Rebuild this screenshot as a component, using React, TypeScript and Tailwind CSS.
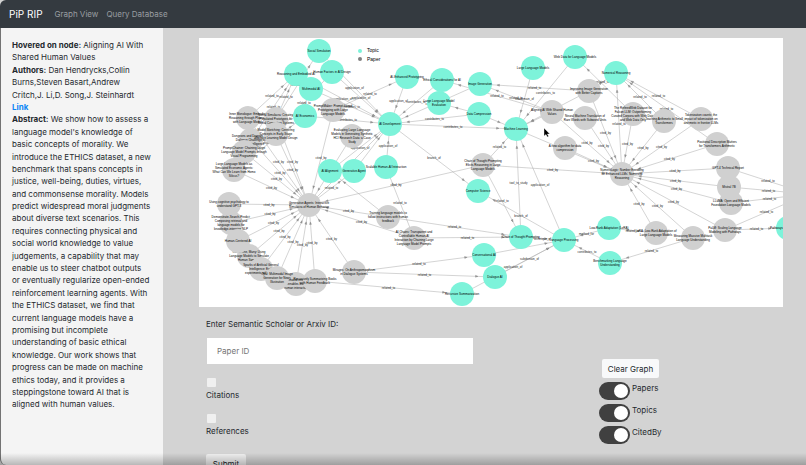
import React from "react";

type Kind = "topic" | "paper";

interface GraphNode {
  x: number;
  y: number;
  kind: Kind;
  lines: string[];
}

const topic = (x: number, y: number, ...lines: string[]): GraphNode => ({ x, y, kind: "topic", lines });
const paper = (x: number, y: number, ...lines: string[]): GraphNode => ({ x, y, kind: "paper", lines });

// later nodes are painted over earlier ones
const nodes: Record<string, GraphNode> = {
  inner: paper(248, 118, "Inner Monologue: Embodied", "Reasoning through Planning", "with Language Models"),
  dungeons: paper(251, 140, "Dungeons and Dragons as a", "Dialogue Challenge for", "Artificial Intelligence"),
  simulacra: paper(276, 119, "Social Simulacra: Creating", "Populated Prototypes for", "Social Computing Systems"),
  sketching: paper(276, 134, "Model Sketching: Centering", "Concepts in Early-Stage", "Machine Learning Model Design"),
  chainer: paper(244, 152, "PromptChainer: Chaining Large", "Language Model Prompts through", "Visual Programming"),
  homo: paper(234, 170, "Large Language Models as", "Simulated Economic Agents:", "What Can We Learn from Homo", "Silicus?"),
  maker: paper(333, 110, "PromptMaker: Prompt-based", "Prototyping with Large", "Language Models"),
  hci: paper(352, 136, "Evaluating Large Language", "Models in Generating Synthetic", "HCI Research Data: a Case", "Study"),
  cognitive: paper(229, 204, "Using cognitive psychology to", "understand GPT-3"),
  search: paper(231, 223, "Demonstrate-Search-Predict:", "Composing retrieval and", "language models for", "knowledge-intensive NLP"),
  many: paper(249, 256, "Out of One, Many: Using", "Language Models to Simulate", "Human Samples"),
  humanAi: paper(238, 241, "Human-Centered AI"),
  sparks: paper(261, 269, "Sparks of Artificial General", "Intelligence: Early", "experiments with GPT-4"),
  automated: paper(296, 284, "Automated emotion", "and AI enables learning in", "human interaction"),
  multiImage: paper(277, 278, "Opal: Multimodal Image", "Generation for News", "Illustration"),
  books: paper(315, 281, "Recursively Summarizing Books", "with Human Feedback"),
  mirages: paper(354, 272, "Mirages: On Anthropomorphism", "in Dialogue Systems"),
  training: paper(388, 217, "Training language models to", "follow instructions with human", "feedback"),
  chains: paper(414, 238, "AI Chains: Transparent and", "Controllable Human-AI", "Interaction by Chaining Large", "Language Model Prompts"),
  cot: paper(483, 165, "Chain of Thought Prompting", "Elicits Reasoning in Large", "Language Models"),
  agents: paper(309, 205, "Generative Agents: Interactive", "Simulacra of Human Behavior"),
  caption: paper(589, 91, "Improving Image Generation", "with Better Captions"),
  nmt: paper(585, 118, "Neural Machine Translation of", "Rare Words with Subword Units"),
  ethics: paper(552, 112, "Aligning AI With Shared Human", "Values"),
  bpe: paper(565, 148, "A new algorithm for data", "compression"),
  refined: paper(633, 114, "The RefinedWeb Dataset for", "Falcon LLM: Outperforming", "Curated Corpora with Web Data,", "and Web Data Only"),
  arithmetic: paper(664, 121, "Teaching Arithmetic to Small", "Transformers"),
  token: paper(701, 119, "Tokenization counts: the", "impact of tokenization on", "arithmetic in frontier LLMs"),
  positional: paper(717, 144, "Positional Description Matters", "for Transformers Arithmetic"),
  gpt4: paper(728, 168, "GPT-4 Technical Report"),
  llama: paper(731, 203, "LLaMA: Open and Efficient", "Foundation Language Models"),
  mistral: paper(729, 187, "Mistral 7B"),
  palm: paper(725, 230, "PaLM: Scaling Language", "Modeling with Pathways"),
  lora: paper(656, 233, "LoRA: Low-Rank Adaptation of", "Large Language Models"),
  mmlu: paper(693, 238, "Measuring Massive Multitask", "Language Understanding"),
  numero: paper(622, 174, "NumeroLogic: Number Encoding", "for Enhanced LLMs' Numerical", "Reasoning"),
  social: topic(319, 51, "Social Simulation"),
  embodied: topic(296, 74, "Reasoning and Embodied AI"),
  factors: topic(332, 72, "Human Factors in AI Design"),
  multimodal: topic(311, 89, "Multimodal AI"),
  economics: topic(305, 116, "AI Economics"),
  alignment: topic(330, 171, "AI Alignment"),
  genAgent: topic(354, 171, "Generative Agent"),
  scalable: topic(386, 167, "Scalable Human-AI Interaction"),
  enhanced: topic(407, 77, "AI-Enhanced Prototyping"),
  ethical: topic(442, 80, "Ethical Considerations for AI"),
  evaluation: topic(439, 103, "Large Language Model", "Evaluation"),
  imageGen: topic(480, 84, "Image Generation"),
  compression: topic(479, 114, "Data Compression"),
  aiDev: topic(390, 124, "AI Development"),
  llm: topic(533, 68, "Large Language Models"),
  webData: topic(575, 57, "Web Data for Language Models"),
  numerical: topic(616, 73, "Numerical Reasoning"),
  ml: topic(516, 129, "Machine Learning"),
  cs: topic(478, 191, "Computer Science"),
  cotTopic: topic(521, 237, "Chain of Thought Prompting"),
  nlp: topic(564, 240, "Language Processing"),
  conversational: topic(484, 255, "Conversational AI"),
  dialogue: topic(495, 277, "Dialogue AI"),
  recursive: topic(462, 294, "Recursive Summarization"),
  loraTopic: topic(609, 228, "Low-Rank Adaptation (LoRA)"),
  benchmark: topic(610, 263, "Benchmarking Language", "Understanding"),
  pathways: topic(788, 228, "Pathways Language Model"),
  offscreen: topic(808, 194),
};

const edges: [string, string, string][] = [
  ["inner", "embodied", "related_to"],
  ["simulacra", "social", "related_to"],
  ["sketching", "factors", "related_to"],
  ["dungeons", "embodied", "related_to"],
  ["simulacra", "embodied", "related_to"],
  ["homo", "economics", "related_to"],
  ["maker", "enhanced", "related_to"],
  ["factors", "aiDev", "application_of"],
  ["social", "aiDev", "application_of"],
  ["multimodal", "aiDev", "contributes_to"],
  ["embodied", "aiDev", "application_of"],
  ["economics", "aiDev", "contributes_to"],
  ["enhanced", "aiDev", "application_of"],
  ["ethical", "aiDev", "contributes_to"],
  ["imageGen", "aiDev", "contributes_to"],
  ["compression", "evaluation", ""],
  ["compression", "aiDev", "contributes_to"],
  ["aiDev", "ml", "contributes_to"],
  ["alignment", "aiDev", "application_of"],
  ["genAgent", "aiDev", ""],
  ["scalable", "aiDev", "application_of"],
  ["agents", "aiDev", ""],
  ["aiDev", "cs", "branch_of"],
  ["hci", "agents", ""],
  ["maker", "agents", "cited_by"],
  ["inner", "agents", "cited_by"],
  ["simulacra", "agents", "cited_by"],
  ["sketching", "agents", "cited_by"],
  ["dungeons", "agents", "cited_by"],
  ["chainer", "agents", "cited_by"],
  ["homo", "agents", "cited_by"],
  ["cognitive", "agents", "cited_by"],
  ["search", "agents", "cited_by"],
  ["humanAi", "agents", "cited_by"],
  ["many", "agents", "cited_by"],
  ["sparks", "agents", "cited_by"],
  ["multiImage", "agents", "cited_by"],
  ["automated", "agents", "cited_by"],
  ["books", "agents", "cited_by"],
  ["mirages", "agents", "cited_by"],
  ["training", "agents", "cited_by"],
  ["chains", "agents", "cited_by"],
  ["cot", "agents", "cited_by"],
  ["agents", "genAgent", "related_to"],
  ["training", "alignment", ""],
  ["chains", "scalable", "related_to"],
  ["training", "cotTopic", "related_to"],
  ["chains", "cotTopic", "related_to"],
  ["mirages", "conversational", "related_to"],
  ["mirages", "dialogue", "related_to"],
  ["books", "recursive", "related_to"],
  ["caption", "imageGen", "related_to"],
  ["ethics", "imageGen", "related_to"],
  ["ethics", "ethical", "related_to"],
  ["compression", "ml", ""],
  ["llm", "ml", "subdomain_of"],
  ["webData", "ml", "contributes_to"],
  ["caption", "ml", ""],
  ["ethics", "ml", ""],
  ["refined", "webData", ""],
  ["numero", "numerical", "related_to"],
  ["caption", "numerical", "related_to"],
  ["arithmetic", "numerical", "related_to"],
  ["token", "numerical", "related_to"],
  ["positional", "numerical", "related_to"],
  ["ethics", "numero", "cited_by"],
  ["nmt", "numero", "cited_by"],
  ["caption", "numero", "cited_by"],
  ["bpe", "numero", "cited_by"],
  ["ml", "numero", ""],
  ["refined", "numero", "cited_by"],
  ["arithmetic", "numero", "cited_by"],
  ["token", "numero", "cited_by"],
  ["positional", "numero", "cited_by"],
  ["gpt4", "numero", "cited_by"],
  ["mistral", "numero", "cited_by"],
  ["llama", "numero", "cited_by"],
  ["palm", "numero", "cited_by"],
  ["lora", "numero", "cited_by"],
  ["mmlu", "numero", "cited_by"],
  ["cot", "numero", "cited_by"],
  ["cot", "ml", "related_to"],
  ["cot", "cotTopic", "related_to"],
  ["cotTopic", "ml", "tool_to_study"],
  ["nlp", "ml", "application_of"],
  ["nlp", "cs", "branch_of"],
  ["cotTopic", "nlp", "technique_of"],
  ["conversational", "nlp", ""],
  ["dialogue", "nlp", "subdomain_of"],
  ["recursive", "nlp", "application_of"],
  ["loraTopic", "nlp", "method_for"],
  ["benchmark", "nlp", "contributes_to"],
  ["lora", "loraTopic", "related_to"],
  ["mmlu", "benchmark", "related_to"],
  ["palm", "pathways", "related_to"],
  ["gpt4", "offscreen", "related_to"],
  ["mistral", "offscreen", "related_to"],
  ["llama", "offscreen", "related_to"],
  ["palm", "offscreen", "related_to"],
];

const Edge = ({ from, to, label }: { from: GraphNode; to: GraphNode; label: string }) => {
  const angle = Math.atan2(to.y - from.y, to.x - from.x);
  const ax = to.x - Math.cos(angle) * 18;
  const ay = to.y - Math.sin(angle) * 18;
  return (
    <g>
      <line x1={from.x} y1={from.y} x2={to.x} y2={to.y} stroke="#a8a8a8" strokeWidth="0.5" />
      <path
        d="M-1.500 -1L1 0L-1.500 1Z"
        fill="#999"
        stroke="#777"
        strokeWidth="0.3"
        transform={`translate(${ax} ${ay}) rotate(${(angle * 180) / Math.PI})`}
      />
      {label && (
        <text x={(from.x + to.x) / 2} y={(from.y + to.y) / 2 + 1} textAnchor="middle" className="fill-neutral-800 text-[3px]">
          {label}
        </text>
      )}
    </g>
  );
};

const Node = ({ node }: { node: GraphNode }) => (
  <g>
    <circle cx={node.x} cy={node.y} r="12" fill={node.kind === "topic" ? "#7df3da" : "#d0d0d0"} />
    <text textAnchor="middle" className="fill-black text-[3px]">
      {node.lines.map((line, i) => (
        <tspan key={line} x={node.x} y={node.y + 1 + (i - (node.lines.length - 1) / 2) * 4}>
          {line}
        </tspan>
      ))}
    </text>
  </g>
);

const Graph = () => (
  <svg viewBox="199 38 584 269" className="block w-full bg-white" role="img" aria-label="Paper and topic graph">
    {edges.map(([from, to, label]) => (
      <Edge key={`${from}-${to}`} from={nodes[from]} to={nodes[to]} label={label} />
    ))}
    {Object.entries(nodes).map(([id, node]) => (
      <Node key={id} node={node} />
    ))}
    {/* legend */}
    <circle cx="360" cy="51" r="2" fill="#7df3da" />
    <circle cx="360" cy="59" r="2" fill="#808080" />
    <text x="367" y="52" className="text-[5px]">Topic</text>
    <text x="367" y="61" className="text-[5px]">Paper</text>
    {/* pointer */}
    <path d="M544 128v8l2-1.500 1.300 2.500 1.300-.7-1.200-2.300h2.400z" fill="#000" stroke="#fff" strokeWidth="0.4" />
  </svg>
);

const Toggle = ({ label }: { label: string }) => (
  <label className="flex h-[22px] items-start gap-[2px]">
    <input type="checkbox" defaultChecked className="peer sr-only" />
    <span className="flex h-[18px] w-[31px] shrink-0 items-center rounded-full bg-[#404040] px-[2px] peer-checked:justify-end">
      <span className="size-[14px] rounded-full bg-white" />
    </span>
    <span className="leading-[13px]">{label}</span>
  </label>
);

const Sidebar = () => (
  <aside className="w-[163px] shrink-0 rounded-bl-md border-l border-neutral-500 bg-[#f4f4f4] pt-[11px] pr-3 pl-[11px] leading-[1.55]">
    <p>
      <b>Hovered on node:</b> Aligning AI With Shared Human Values
    </p>
    <p>
      <b>Authors:</b> Dan Hendrycks,Collin Burns,Steven Basart,Andrew Critch,J. Li,D. Song,J. Steinhardt
    </p>
    <p>
      <a href="#paper" className="font-bold text-[#0a84f5]">Link</a>
    </p>
    <p>
      <b>Abstract:</b> We show how to assess a language model's knowledge of basic concepts of morality. We introduce
      the ETHICS dataset, a new benchmark that spans concepts in justice, well-being, duties, virtues, and commonsense
      morality. Models predict widespread moral judgments about diverse text scenarios. This requires connecting
      physical and social world knowledge to value judgements, a capability that may enable us to steer chatbot outputs
      or eventually regularize open-ended reinforcement learning agents. With the ETHICS dataset, we find that current
      language models have a promising but incomplete understanding of basic ethical knowledge. Our work shows that
      progress can be made on machine ethics today, and it provides a steppingstone toward AI that is aligned with
      human values.
    </p>
  </aside>
);

export default function App() {
  return (
    <div className="relative flex h-screen flex-col overflow-hidden bg-[#d3d3d3] font-['Inter','Liberation_Sans',sans-serif] text-[8px] text-[#24292e]">
      <nav className="flex h-7 shrink-0 items-center rounded-tl-md bg-[#343a40] pl-[9px] text-[#999da0]">
        <a href="#home" className="mr-3 text-[10px] text-white">PiP RIP</a>
        <a href="#graph" className="mr-2">Graph View</a>
        <a href="#query">Query Database</a>
      </nav>
      <div className="flex min-h-0 flex-1">
        <Sidebar />
        <main className="min-w-0 flex-1 pt-[10px] pr-[23px] pl-9">
          <div className="font-['Liberation_Sans',Arial,sans-serif]">
            <Graph />
          </div>
          <div className="flex items-start justify-between pr-[120px] pl-[7px]">
            <form className="flex w-[267px] flex-col items-start pt-[11px]" onSubmit={(e) => e.preventDefault()}>
              <label htmlFor="paper-id" className="leading-3">Enter Semantic Scholar or Arxiv ID:</label>
              <input
                id="paper-id"
                type="text"
                placeholder="Paper ID"
                className="mt-2 h-[26px] w-full border-l border-[#d3d3d3] bg-white px-[10px] placeholder:text-[#757575]"
              />
              <label className="mt-[14px] flex h-9 flex-col leading-3">
                <input type="checkbox" className="mb-[2px] ml-px size-[9px] appearance-none rounded-[1px] bg-[#f0f0f0] checked:bg-[#0a84f5]" />
                Citations
              </label>
              <label className="flex h-10 flex-col leading-3">
                <input type="checkbox" className="mb-[2px] ml-px size-[9px] appearance-none rounded-[1px] bg-[#f0f0f0] checked:bg-[#0a84f5]" />
                References
              </label>
              <button type="submit" className="h-[19px] w-10 rounded-xs bg-[#f0f0f0]">Submit</button>
            </form>
            <div className="flex w-16 flex-col items-start pt-[52px]">
              <button type="button" className="mb-1 ml-[3px] h-[19px] w-[57px] rounded-xs bg-[#f8f9fa]">Clear Graph</button>
              <Toggle label="Papers" />
              <Toggle label="Topics" />
              <Toggle label="CitedBy" />
            </div>
          </div>
        </main>
      </div>
      <div className="pointer-events-none absolute inset-x-0 bottom-0 h-3 bg-linear-to-b from-transparent to-black/25" />
    </div>
  );
}
